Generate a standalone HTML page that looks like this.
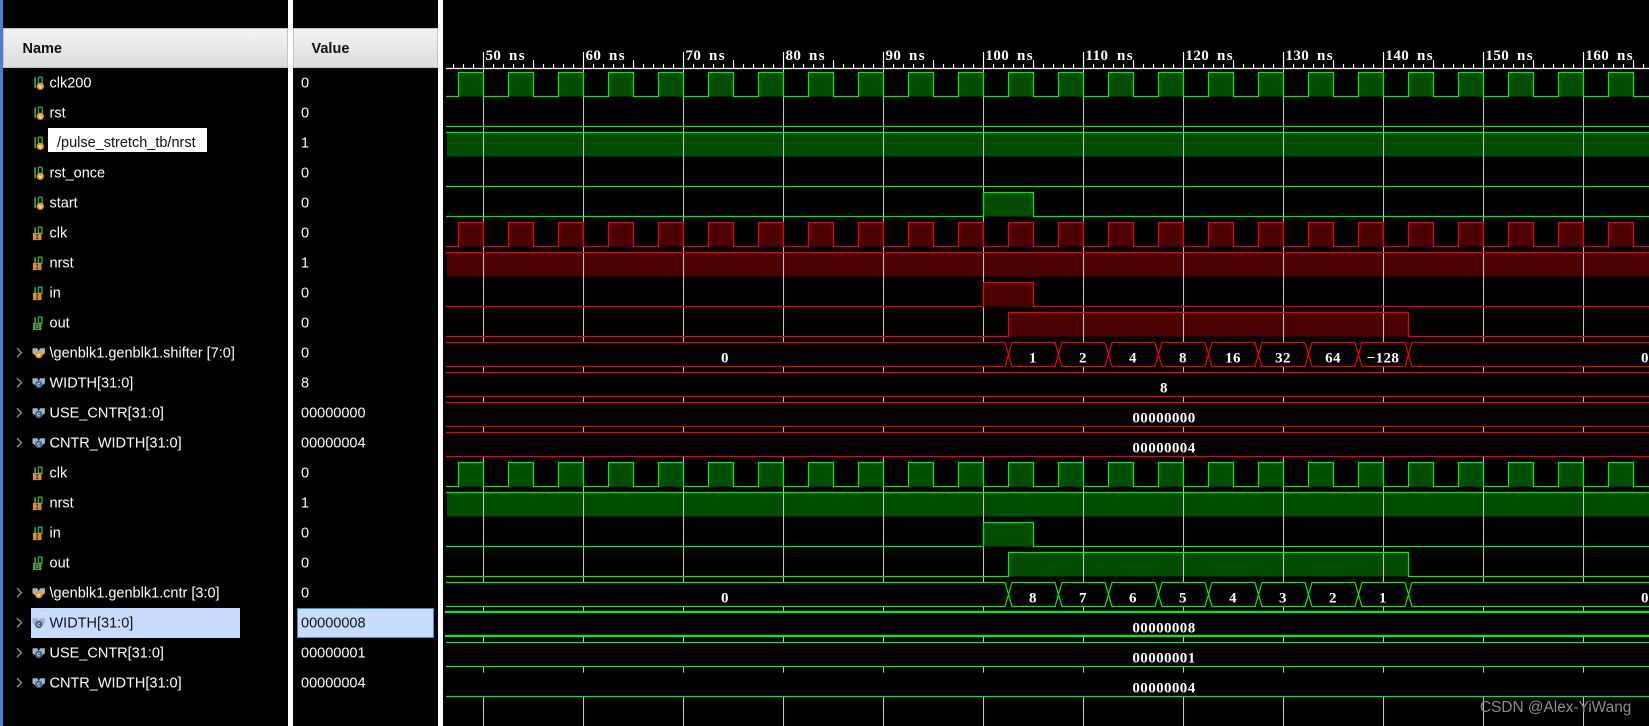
<!DOCTYPE html>
<html><head><meta charset="utf-8"><title>Waveform</title>
<style>
html,body{margin:0;padding:0;background:#000;width:1649px;height:726px;overflow:hidden}
svg{display:block}
.n{font:14.5px "Liberation Sans",sans-serif;fill:#fff}
.h{font:bold 14.5px "Liberation Sans",sans-serif;fill:#111}
.w{font:bold 15px "Liberation Serif",serif;fill:#fff;letter-spacing:.4px;text-anchor:middle}
.r{font:bold 15px "Liberation Serif",serif;fill:#fff;letter-spacing:.4px}
.r tspan{letter-spacing:1.4px}
</style></head><body>
<svg width="1649" height="726" viewBox="0 0 1649 726" xmlns="http://www.w3.org/2000/svg">
<defs>
<linearGradient id="hg" x1="0" y1="0" x2="0" y2="1"><stop offset="0" stop-color="#f4f4f4"/><stop offset="1" stop-color="#dcdcdc"/></linearGradient>
<path id="ck" d="M446 24h12.5v-24h25v24h25v-24h25v24h25v-24h25v24h25v-24h25v24h25v-24h25v24h25v-24h25v24h25v-24h25v24h25v-24h25v24h25v-24h25v24h25v-24h25v24h25v-24h25v24h25v-24h25v24h25v-24h25v24h25v-24h25v24h25v-24h25v24h25v-24h25v24h25v-24h25v24h25v-24h25v24h25v-24h25v24h25v-24h25v24h25v-24h25v24h25v-24h25v24h25v-24h25v24h25v-24h25v24h25"/>
<path id="in" d="M446 24H983.5V0H1033.5V24H1649"/>
<path id="ou" d="M446 24H1008.5V0H1408.5V24H1649"/>
<path id="lo" d="M446 24H1649"/>
<path id="hi" d="M446 0H1649"/>
<path id="co" d="M446 0H1649M446 24H1649"/>
<path id="bu" d="M446 0H1005l7 24H1055l7-24H1105l7 24H1155l7-24H1205l7 24H1255l7-24H1305l7 24H1355l7-24H1405l7 24H1649M446 24H1005l7-24H1055l7 24H1105l7-24H1155l7 24H1205l7-24H1255l7 24H1305l7-24H1355l7 24H1405l7-24H1649"/>
<g id="is"><path d="M35.2 -5.5V5.5" stroke="#35a045" stroke-width="1.8" fill="none"/><rect x="38.4" y="-5.5" width="3.8" height="9" rx="1" fill="none" stroke="#35a045" stroke-width="1.4"/><circle cx="40.3" cy="3.6" r="3.6" fill="#ee9a2e"/><path d="M39 2.8l1.3 2.2 1.3-2.2" fill="none" stroke="#fff" stroke-width=".8"/></g>
<g id="ii"><path d="M35.2 -5.5V1" stroke="#35a045" stroke-width="1.8" fill="none"/><rect x="38.4" y="-5.5" width="3.6" height="6" fill="none" stroke="#35a045" stroke-width="1.4"/><rect x="33" y=".4" width="8.5" height="7" fill="#dd9028"/><path d="M36 2h2.5M37.2 2v4M36 6h2.5" stroke="#3a2a10" stroke-width=".9" fill="none"/></g>
<g id="io"><path d="M35.2 -5.5V1" stroke="#35a045" stroke-width="1.8" fill="none"/><rect x="38.4" y="-5.5" width="3.6" height="6" fill="none" stroke="#35a045" stroke-width="1.4"/><rect x="33" y=".4" width="8.5" height="7" fill="#4c9c4c"/><rect x="35.8" y="2" width="2.8" height="3.8" fill="none" stroke="#1c4c1c" stroke-width=".9"/></g>
<g id="bv"><path d="M32.5-4.5h5l1.2 3 1.2-3h5v5l-2.5 2h-7.4l-2.5-2z" fill="#9fb6c8"/><circle cx="38.8" cy="1.8" r="3.7" fill="#ee9a2e"/><path d="M37.5 1l1.3 2.3 1.3-2.3" fill="none" stroke="#fff" stroke-width=".8"/></g>
<g id="bp"><path d="M32.5-4.5h5l1.2 3 1.2-3h5v5l-2.5 2h-7.4l-2.5-2z" fill="#9fb6c8"/><circle cx="38.8" cy="1.8" r="3.7" fill="#41608f"/><path d="M40 .8a1.4 1.4 0 1 0 0 2" fill="none" stroke="#dfe8f5" stroke-width=".7"/></g>
<path id="ch" d="M17-4.5L21.5 0 17 4.5" fill="none" stroke="#858585" stroke-width="1.5"/>
</defs>

<rect width="1649" height="726" fill="#000"/>
<rect x="0" y="0" width="3" height="726" fill="#4a7fd6"/>
<rect x="288" y="0" width="5" height="726" fill="#fff"/>
<rect x="438" y="0" width="5" height="726" fill="#fff"/>

<!-- headers -->
<rect x="3.5" y="28.5" width="284" height="39" fill="url(#hg)" stroke="#c4c4c4"/>
<rect x="293.5" y="28.5" width="144" height="39" fill="url(#hg)" stroke="#c4c4c4"/>
<text class="h" x="22.5" y="53">Name</text>
<text class="h" x="311.5" y="53">Value</text>

<!-- fills -->
<g fill="#004d00" stroke="none">
<use href="#ck" y="72.5"/><rect x="447" y="132.5" width="1202" height="24"/><use href="#in" y="192.5"/>
<use href="#ck" y="462.5"/><rect x="447" y="492.5" width="1202" height="24"/><use href="#in" y="522.5"/><use href="#ou" y="552.5"/>
</g>
<g fill="#4d0000" stroke="none">
<use href="#ck" y="222.5"/><rect x="447" y="252.5" width="1202" height="24"/><use href="#in" y="282.5"/><use href="#ou" y="312.5"/>
</g>

<!-- grid -->
<g stroke="#c2c2c2" stroke-width="1.1">
<path d="M483.5 52V726M583.5 52V726M683.5 52V726M783.5 52V726M883.5 52V726M983.5 52V726M1083.5 52V726M1183.5 52V726M1283.5 52V726M1383.5 52V726M1483.5 52V726M1583.5 52V726"/>
</g>

<!-- opaque bus rows -->
<g fill="#000">
<rect x="446" y="342.5" width="1203" height="24"/><rect x="446" y="372.5" width="1203" height="24"/><rect x="446" y="402.5" width="1203" height="24"/><rect x="446" y="432.5" width="1203" height="24"/>
<rect x="446" y="582.5" width="1203" height="24"/><rect x="446" y="612.5" width="1203" height="24"/><rect x="446" y="642.5" width="1203" height="24"/><rect x="446" y="672.5" width="1203" height="24"/>
</g>

<!-- green signals -->
<g fill="none" stroke="#00f000" stroke-width="1.2">
<use href="#ck" y="72.5"/><use href="#lo" y="102.5"/><use href="#hi" y="132.5"/><use href="#lo" y="162.5"/><use href="#in" y="192.5"/>
<use href="#ck" y="462.5"/><use href="#hi" y="492.5"/><use href="#in" y="522.5"/><use href="#ou" y="552.5"/>
<use href="#bu" y="582.5"/><use href="#co" y="642.5"/><use href="#lo" y="672.5"/>
<path d="M445 612H1649M445 636H1649" stroke-width="2.2"/>
</g>
<!-- red signals -->
<g fill="none" stroke="#f00000" stroke-width="1.2">
<use href="#ck" y="222.5"/><use href="#hi" y="252.5"/><use href="#in" y="282.5"/><use href="#ou" y="312.5"/>
<use href="#bu" y="342.5"/><use href="#co" y="372.5"/><use href="#co" y="402.5"/><use href="#co" y="432.5"/>
</g>

<!-- ruler -->
<path d="M446 68.5H1649" stroke="#fff" stroke-width="1.2"/>
<path d="M453 66H1649" stroke="#fff" stroke-width="4" stroke-dasharray="1.1 8.9"/>
<path d="M483.5 52V68M583.5 52V68M683.5 52V68M783.5 52V68M883.5 52V68M983.5 52V68M1083.5 52V68M1183.5 52V68M1283.5 52V68M1383.5 52V68M1483.5 52V68M1583.5 52V68M533.5 60V68M633.5 60V68M733.5 60V68M833.5 60V68M933.5 60V68M1033.5 60V68M1133.5 60V68M1233.5 60V68M1333.5 60V68M1433.5 60V68M1533.5 60V68M1633.5 60V68" stroke="#fff" stroke-width="1.1"/>
<text class="r" x="485.5" y="60">50<tspan x="509">ns</tspan></text>
<text class="r" x="585.5" y="60">60<tspan x="609">ns</tspan></text>
<text class="r" x="685.5" y="60">70<tspan x="709">ns</tspan></text>
<text class="r" x="785.5" y="60">80<tspan x="809">ns</tspan></text>
<text class="r" x="885.5" y="60">90<tspan x="909">ns</tspan></text>
<text class="r" x="985.5" y="60">100<tspan x="1017">ns</tspan></text>
<text class="r" x="1085.5" y="60">110<tspan x="1117">ns</tspan></text>
<text class="r" x="1185.5" y="60">120<tspan x="1217">ns</tspan></text>
<text class="r" x="1285.5" y="60">130<tspan x="1317">ns</tspan></text>
<text class="r" x="1385.5" y="60">140<tspan x="1417">ns</tspan></text>
<text class="r" x="1485.5" y="60">150<tspan x="1517">ns</tspan></text>
<text class="r" x="1585.5" y="60">160<tspan x="1617">ns</tspan></text>

<!-- bus values -->
<text class="w" x="725" y="362.5">0</text><text class="w" x="1033" y="362.5">1</text><text class="w" x="1083" y="362.5">2</text><text class="w" x="1133" y="362.5">4</text><text class="w" x="1183" y="362.5">8</text><text class="w" x="1233" y="362.5">16</text><text class="w" x="1283" y="362.5">32</text><text class="w" x="1333" y="362.5">64</text><text class="w" x="1383" y="362.5">−128</text><text class="w" x="1645" y="362.5">0</text>
<text class="w" x="1164" y="392.5">8</text><text class="w" x="1164" y="422.5">00000000</text><text class="w" x="1164" y="452.5">00000004</text>
<text class="w" x="725" y="602.5">0</text><text class="w" x="1033" y="602.5">8</text><text class="w" x="1083" y="602.5">7</text><text class="w" x="1133" y="602.5">6</text><text class="w" x="1183" y="602.5">5</text><text class="w" x="1233" y="602.5">4</text><text class="w" x="1283" y="602.5">3</text><text class="w" x="1333" y="602.5">2</text><text class="w" x="1383" y="602.5">1</text><text class="w" x="1645" y="602.5">0</text>
<text class="w" x="1164" y="632.5">00000008</text><text class="w" x="1164" y="662.5">00000001</text><text class="w" x="1164" y="692.5">00000004</text>

<!-- selection -->
<rect x="31" y="608" width="209" height="30" fill="#c8dcff"/>
<rect x="297.5" y="608.5" width="136" height="29" fill="#c8dcff" stroke="#3a8fd0"/>

<!-- chevrons -->
<use href="#ch" y="352.7"/><use href="#ch" y="382.7"/><use href="#ch" y="412.7"/><use href="#ch" y="442.7"/><use href="#ch" y="592.7"/><use href="#ch" y="622.7"/><use href="#ch" y="652.7"/><use href="#ch" y="682.7"/>

<!-- icons -->
<use href="#is" y="82.7"/><use href="#is" y="112.7"/><use href="#is" y="142.7"/><use href="#is" y="172.7"/><use href="#is" y="202.7"/>
<use href="#ii" y="232.7"/><use href="#ii" y="262.7"/><use href="#ii" y="292.7"/><use href="#io" y="322.7"/>
<use href="#bv" y="352.7"/><use href="#bp" y="382.7"/><use href="#bp" y="412.7"/><use href="#bp" y="442.7"/>
<use href="#ii" y="472.7"/><use href="#ii" y="502.7"/><use href="#ii" y="532.7"/><use href="#io" y="562.7"/>
<use href="#bv" y="592.7"/><use href="#bp" y="622.7"/><use href="#bp" y="652.7"/><use href="#bp" y="682.7"/>

<!-- names -->
<text class="n" x="49.5" y="87.5">clk200</text>
<text class="n" x="49.5" y="117.5">rst</text>
<text class="n" x="49.5" y="177.5">rst_once</text>
<text class="n" x="49.5" y="207.5">start</text>
<text class="n" x="49.5" y="237.5">clk</text>
<text class="n" x="49.5" y="267.5">nrst</text>
<text class="n" x="49.5" y="297.5">in</text>
<text class="n" x="49.5" y="327.5">out</text>
<text class="n" x="49.5" y="357.5">\genblk1.genblk1.shifter [7:0]</text>
<text class="n" x="49.5" y="387.5">WIDTH[31:0]</text>
<text class="n" x="49.5" y="417.5">USE_CNTR[31:0]</text>
<text class="n" x="49.5" y="447.5">CNTR_WIDTH[31:0]</text>
<text class="n" x="49.5" y="477.5">clk</text>
<text class="n" x="49.5" y="507.5">nrst</text>
<text class="n" x="49.5" y="537.5">in</text>
<text class="n" x="49.5" y="567.5">out</text>
<text class="n" x="49.5" y="597.5">\genblk1.genblk1.cntr [3:0]</text>
<text class="n" x="49.5" y="627.5" style="fill:#111">WIDTH[31:0]</text>
<text class="n" x="49.5" y="657.5">USE_CNTR[31:0]</text>
<text class="n" x="49.5" y="687.5">CNTR_WIDTH[31:0]</text>

<!-- tooltip -->
<rect x="48" y="128" width="159" height="24" fill="#fff"/>
<text class="n" x="57" y="147" style="fill:#111">/pulse_stretch_tb/nrst</text>

<!-- values -->
<text class="n" x="301" y="87.5">0</text>
<text class="n" x="301" y="117.5">0</text>
<text class="n" x="301" y="147.5">1</text>
<text class="n" x="301" y="177.5">0</text>
<text class="n" x="301" y="207.5">0</text>
<text class="n" x="301" y="237.5">0</text>
<text class="n" x="301" y="267.5">1</text>
<text class="n" x="301" y="297.5">0</text>
<text class="n" x="301" y="327.5">0</text>
<text class="n" x="301" y="357.5">0</text>
<text class="n" x="301" y="387.5">8</text>
<text class="n" x="301" y="417.5">00000000</text>
<text class="n" x="301" y="447.5">00000004</text>
<text class="n" x="301" y="477.5">0</text>
<text class="n" x="301" y="507.5">1</text>
<text class="n" x="301" y="537.5">0</text>
<text class="n" x="301" y="567.5">0</text>
<text class="n" x="301" y="597.5">0</text>
<text class="n" x="301" y="627.5" style="fill:#111">00000008</text>
<text class="n" x="301" y="657.5">00000001</text>
<text class="n" x="301" y="687.5">00000004</text>

<!-- watermark -->
<text x="1480" y="712" style="font:15.4px 'Liberation Sans',sans-serif;fill:#8c8c8c">CSDN @Alex-YiWang</text>
</svg>
</body></html>
